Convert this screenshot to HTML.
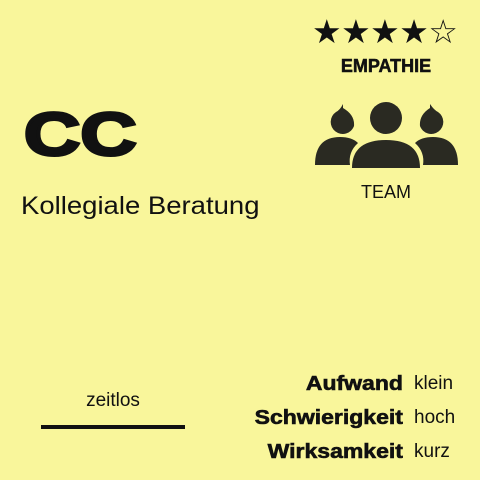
<!DOCTYPE html>
<html><head><style>
body{margin:0;width:480px;height:480px;background:#f9f69b;font-family:"Liberation Sans",sans-serif;color:#111;position:relative;overflow:hidden}
div{position:absolute;white-space:nowrap}
</style></head><body>
<div style="left:24px;top:102px;font-size:60px;font-weight:bold;-webkit-text-stroke:3px #111;transform:scaleX(1.3);transform-origin:left;line-height:66px">CC</div>
<div style="left:21px;top:192px;font-size:25px;transform:scaleX(1.1);transform-origin:left">Kollegiale Beratung</div>
<div style="left:312px;top:12px;font-size:33px;letter-spacing:-0.5px">★★★★☆</div>
<div style="left:326px;top:56px;font-size:18px;font-weight:bold;-webkit-text-stroke:0.5px #111;width:120px;text-align:center">EMPATHIE</div>
<svg style="position:absolute;left:0;top:0" width="480" height="480">
<g fill="#2a2a22">
<circle cx="386" cy="118" r="16"/>
<path d="M352 168 Q352 140 386 140 Q420 140 420 168 Z"/>
<path d="M343 108 Q355 115 354 126 A12 12 0 1 1 336 112 Q340 110 343 104 Z"/>
<path d="M430 104 Q434 110 438 112 A12 12 0 1 1 420 126 Q419 115 430 108 Z"/>
<path d="M315 165 Q315 137 340 137 Q352 137 358 143 Q348 152 350 165 Z"/>
<path d="M458 165 Q458 137 433 137 Q421 137 415 143 Q425 152 423 165 Z"/>
</g>
<rect x="41" y="425" width="144" height="4" fill="#111"/>
</svg>
<div style="left:336px;top:182px;font-size:18px;width:100px;text-align:center">TEAM</div>
<div style="left:63px;top:390px;font-size:19px;width:100px;text-align:center">zeitlos</div>
<div style="right:77px;top:367px;font-size:20px;font-weight:bold;-webkit-text-stroke:0.6px #111;text-align:right;line-height:34px;transform:scaleX(1.15);transform-origin:right">Aufwand<br>Schwierigkeit<br>Wirksamkeit</div>
<div style="left:414px;top:367px;font-size:19px;line-height:34px">klein<br>hoch<br>kurz</div>
</body></html>
